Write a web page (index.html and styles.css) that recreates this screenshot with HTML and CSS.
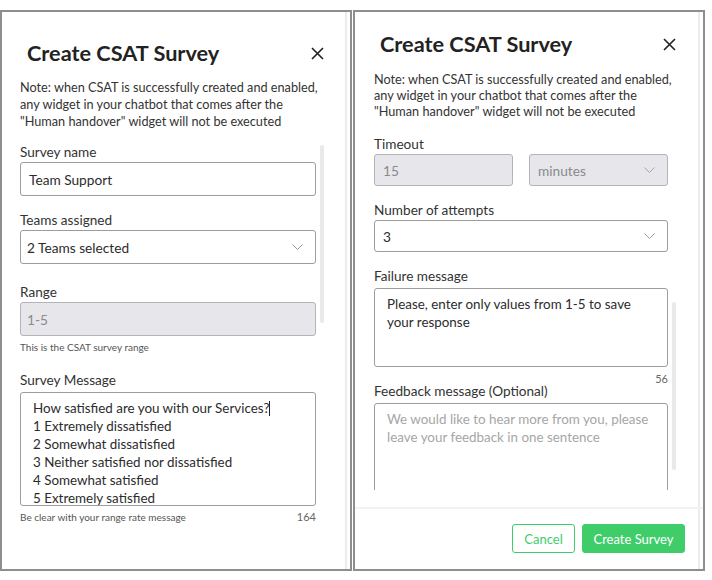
FILE: index.html
```html
<!DOCTYPE html>
<html>
<head>
    <meta charset="UTF-8">
    <title>Create CSAT Survey</title>
    <link rel="stylesheet" href="styles.css">
</head>
<body>
<div class="stage">

    <!-- first step -->
    <section class="modal modal-first">
        <header class="modal-head">
            <div class="title-row">
                <h2 class="modal-title">Create CSAT Survey</h2>
                <button type="button" class="close" aria-label="Close">
                    <svg width="13" height="13" viewBox="0 0 13 13"><path d="M1 1L12 12M12 1L1 12" stroke="#1f1f1f" stroke-width="1.6" fill="none"/></svg>
                </button>
            </div>
            <p class="note">Note: when CSAT is successfully created and enabled,<br>any widget in your chatbot that comes after the<br>"Human handover" widget will not be executed</p>
        </header>
        <div class="modal-body">
            <div class="fields">
                <div class="field">
                    <label class="label">Survey name</label>
                    <div class="input input-name">Team Support</div>
                </div>
                <div class="field field-wide">
                    <label class="label">Teams assigned</label>
                    <div class="input select">
                        <span>2 Teams selected</span>
                        <svg class="chevron" width="11" height="6" viewBox="0 0 11 6"><path d="M0.5 0.5L5.5 5.5L10.5 0.5" stroke="#9a9a9a" stroke-width="1" fill="none"/></svg>
                    </div>
                </div>
                <div class="field field-help">
                    <label class="label">Range</label>
                    <div class="input disabled">1-5</div>
                    <div class="help">This is the CSAT survey range</div>
                </div>
                <div class="field">
                    <label class="label label-area">Survey Message</label>
                    <div class="textarea textarea-survey">How satisfied are you with our Services?<span class="caret"></span><br>1 Extremely dissatisfied<br>2 Somewhat dissatisfied<br>3 Neither satisfied nor dissatisfied<br>4 Somewhat satisfied<br>5 Extremely satisfied</div>
                    <div class="help-row"><span class="help">Be clear with your range rate message</span><span class="count">164</span></div>
                </div>
            </div>
            <div class="track"><div class="thumb thumb-first"></div></div>
        </div>
    </section>

    <!-- second step -->
    <section class="modal modal-second">
        <header class="modal-head">
            <div class="title-row">
                <h2 class="modal-title">Create CSAT Survey</h2>
                <button type="button" class="close" aria-label="Close">
                    <svg width="13" height="13" viewBox="0 0 13 13"><path d="M1 1L12 12M12 1L1 12" stroke="#1f1f1f" stroke-width="1.6" fill="none"/></svg>
                </button>
            </div>
            <p class="note">Note: when CSAT is successfully created and enabled,<br>any widget in your chatbot that comes after the<br>"Human handover" widget will not be executed</p>
        </header>
        <div class="modal-body">
            <div class="fields">
                <div class="field">
                    <label class="label">Timeout</label>
                    <div class="pair">
                        <div class="input disabled">15</div>
                        <div class="input select disabled">
                            <span>minutes</span>
                            <svg class="chevron" width="11" height="6" viewBox="0 0 11 6"><path d="M0.5 0.5L5.5 5.5L10.5 0.5" stroke="#a5a5a5" stroke-width="1" fill="none"/></svg>
                        </div>
                    </div>
                </div>
                <div class="field">
                    <label class="label">Number of attempts</label>
                    <div class="input select">
                        <span>3</span>
                        <svg class="chevron" width="11" height="6" viewBox="0 0 11 6"><path d="M0.5 0.5L5.5 5.5L10.5 0.5" stroke="#9a9a9a" stroke-width="1" fill="none"/></svg>
                    </div>
                </div>
                <div class="field field-tight">
                    <label class="label label-area">Failure message</label>
                    <div class="textarea textarea-failure">Please, enter only values from 1-5 to save<br>your response</div>
                    <div class="help-row"><span class="help"></span><span class="count">56</span></div>
                </div>
                <div class="field">
                    <label class="label label-area">Feedback message (Optional)</label>
                    <div class="textarea textarea-feedback placeholder">We would like to hear more from you, please<br>leave your feedback in one sentence</div>
                </div>
            </div>
            <div class="track"><div class="thumb thumb-second"></div></div>
        </div>
        <footer class="modal-foot">
            <button type="button" class="btn btn-outline">Cancel</button>
            <button type="button" class="btn btn-primary">Create Survey</button>
        </footer>
    </section>

</div>
</body>
</html>
```

FILE: styles.css
```css
html, body{margin: 0; padding: 0; background: #ffffff;}
body{font-family: "Lato", "Liberation Sans", sans-serif; color: #333333;}

.stage{
    display: flex;
    gap: 1px;
    padding-top: 10px;
}

/* modal frame */
.modal{
    width: 352px;
    height: 561px;
    box-sizing: border-box;
    border: 2px solid #8e8e8e;
    background: #ffffff;
    display: flex;
    flex-direction: column;
    overflow: hidden;
    box-shadow: inset -3px 0 0 #ffffff, inset -5px 0 0 #ececec;
}
.modal-second{
    box-shadow: inset -3px 0 0 #ffffff, inset -5px 0 0 #ececec, 0 3px 0 #e3e3e3;
}

.modal-head{padding: 28px 34px 0 18px;}
.modal-second .modal-head{padding: 19px 35px 0 19px;}

.title-row{
    display: flex;
    justify-content: space-between;
    align-items: center;
}
.modal-title{
    margin: 0;
    padding-left: 7px;
    font-size: 21.7px;
    line-height: 26px;
    font-weight: 700;
    color: #222222;
    white-space: nowrap;
}
.modal-second .modal-title{padding-left: 6px;}
.close{
    border: 0;
    background: none;
    padding: 0;
    margin-right: -8px;
    display: flex;
}

.note{
    margin: 13px 0 0;
    font-size: 12.7px;
    line-height: 17px;
    color: #333333;
    white-space: nowrap;
}
.modal-second .note{margin-top: 14px; line-height: 16px;}

/* scroll area */
.modal-body{
    flex: 1;
    min-height: 0;
    display: flex;
    padding: 14px 26px 0 18px;
    overflow: hidden;
}
.modal-second .modal-body{
    flex: none;
    box-sizing: border-box;
    height: 371px;
    padding: 17px 27px 0 19px;
    margin-bottom: 17px;
}
.fields{flex: 1; min-width: 0;}
.track{width: 4px; margin-left: 4px;}
.thumb{background: #e9e9e9; border-radius: 2px;}
.thumb-first{margin-top: 1px; height: 178px;}
.thumb-second{margin-top: 166px; height: 168px;}

.field{margin-bottom: 16px;}
.field-wide{margin-bottom: 20px;}
.field-help{margin-bottom: 19px;}
.field-tight{margin-bottom: -3px;}
.label{
    display: block;
    font-size: 13.6px;
    line-height: 16px;
    margin-bottom: 2px;
    color: #333333;
    white-space: nowrap;
}
.label-area{margin-bottom: 4px;}

.input{
    height: 34px;
    box-sizing: border-box;
    border: 1px solid #9c9c9c;
    border-radius: 3px;
    padding: 0 12px 0 6px;
    display: flex;
    align-items: center;
    justify-content: space-between;
    font-size: 13.7px;
    color: #2c2c2c;
}
.input-name{padding-left: 8px;}
.modal-second .input{height: 32px; padding-left: 8px;}
.disabled{
    background: #e6e6eb;
    border-color: #b4b4b8;
    color: #8a8a8a;
}
.chevron{flex: none;}

.pair{
    display: grid;
    grid-template-columns: 1fr 1fr;
    gap: 16px;
}

.textarea{
    box-sizing: border-box;
    border: 1px solid #9c9c9c;
    border-radius: 3px;
    padding: 6px 12px;
    font-size: 13.4px;
    line-height: 18px;
    color: #2c2c2c;
    overflow: hidden;
    white-space: nowrap;
}
.textarea-survey{height: 114px;}
.textarea-failure{height: 79px;}
.textarea-feedback{height: 100px;}
.placeholder{color: #a6a6a6;}
.caret{
    display: inline-block;
    width: 1px;
    height: 15px;
    background: #222222;
    vertical-align: -3px;
}

.help{
    display: block;
    margin-top: 5px;
    font-size: 10px;
    line-height: 12px;
    color: #555555;
}
.help-row{
    display: flex;
    justify-content: space-between;
    align-items: baseline;
}
.count{
    font-size: 11px;
    line-height: 14px;
    color: #666666;
}
.modal-second .count{margin-top: 5px;}

/* footer */
.modal-foot{
    border-top: 2px solid #f2f2f2;
    display: flex;
    justify-content: flex-end;
    gap: 7px;
    padding: 15px 18px 0 0;
}
.btn{
    height: 29px;
    box-sizing: border-box;
    border-radius: 3px;
    font-family: inherit;
    font-size: 13px;
    cursor: pointer;
}
.btn-outline{
    width: 63px;
    border: 1px solid #3fcd6a;
    background: #ffffff;
    color: #3fcd6a;
}
.btn-primary{
    width: 103px;
    border: 1px solid #3fcd6a;
    background: #3fcd6a;
    color: #ffffff;
}
```
